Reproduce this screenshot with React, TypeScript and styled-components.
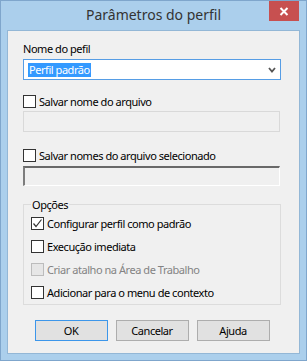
import React from 'react';
import styled, { createGlobalStyle } from 'styled-components';

const GlobalStyle = createGlobalStyle`
  html, body {
    margin: 0;
    padding: 0;
    background: #abcfec;
  }
  body {
    font-family: 'Noto Sans', 'Liberation Sans', sans-serif;
    font-size: 11px;
    letter-spacing: -0.45px;
    color: #000;
  }
  * {
    box-sizing: border-box;
  }
`;

const Window = styled.div`
  position: relative;
  width: 307px;
  height: 361px;
  display: flex;
  flex-direction: column;
  background: #abcfec;
  border: 1px solid #7fa6cc;
  padding-bottom: 6px;
`;

const TitleBar = styled.div`
  height: 29px;
  padding-bottom: 3px;
  display: flex;
  align-items: center;
  justify-content: center;
  font-size: 14px;
  letter-spacing: 0;
  color: #333;
`;

const CloseButton = styled.div`
  position: absolute;
  top: 0;
  right: 7px;
  width: 30px;
  height: 20px;
  background: #c75050;
  display: flex;
  align-items: center;
  justify-content: center;
`;

const Client = styled.div`
  flex: 1;
  margin: 0 6px;
  border: 1px solid #93b7d6;
  background: #f0f0f0;
  padding: 10px 18px 0 15px;
  display: flex;
  flex-direction: column;
`;

const FieldLabel = styled.div`
  line-height: 15px;
`;

const Combo = styled.div`
  margin-top: 3px;
  height: 21px;
  border: 1px solid #569de5;
  background: #fff;
  display: flex;
  align-items: center;
  justify-content: space-between;
  padding: 0 4px 0 4px;
`;

const Selection = styled.span`
  background: #3399ff;
  color: #fff;
  line-height: 14px;
  padding: 0 1px;
`;

const CheckRow = styled.label<{ $gap?: number }>`
  display: flex;
  align-items: center;
  height: 15px;
  margin-top: ${(p) => p.$gap ?? 0}px;
`;

const Box = styled.span<{ $disabled?: boolean }>`
  width: 13px;
  height: 13px;
  flex: none;
  border: 1px solid ${(p) => (p.$disabled ? '#bcbcbc' : '#333')};
  background: ${(p) => (p.$disabled ? '#e6e6e6' : '#fff')};
  margin-right: 3px;
  display: flex;
  align-items: center;
  justify-content: center;
`;

const CheckText = styled.span<{ $disabled?: boolean }>`
  line-height: 15px;
  color: ${(p) => (p.$disabled ? '#838383' : '#000')};
`;

const DisabledInput = styled.div`
  margin-top: 2px;
  width: 257px;
  height: 21px;
  border: 1px solid #d9d9d9;
  background: #f0f0f0;
`;

const SunkenInput = styled.div`
  margin-top: 3px;
  width: 257px;
  height: 20px;
  border-top: 2px solid #696969;
  border-left: 2px solid #7d7d7d;
  border-right: 1px solid #fff;
  border-bottom: 1px solid #fff;
  background: #f0f0f0;
`;

const Group = styled.fieldset`
  margin: 11px 0 0 0;
  min-width: 0;
  width: 258px;
  border: 1px solid #dcdcdc;
  padding: 0 0 4px 7px;
  display: flex;
  flex-direction: column;
  gap: 8px;
`;

const Legend = styled.legend`
  padding: 0 1px;
  line-height: 15px;
  margin-bottom: 4px;
`;

const ButtonRow = styled.div`
  margin-top: 15px;
  display: flex;
  justify-content: center;
  gap: 8px;
`;

const DialogButton = styled.button<{ $focused?: boolean }>`
  width: 73px;
  height: 21px;
  padding: 0;
  font: inherit;
  letter-spacing: inherit;
  color: #000;
  background: #e1e1e1;
  border: 1px solid ${(p) => (p.$focused ? '#3c96ea' : '#adadad')};
`;

const Check = ({
  label,
  checked,
  disabled,
  gap
}: {
  label: string;
  checked?: boolean;
  disabled?: boolean;
  gap?: number;
}) => (
  <CheckRow $gap={gap}>
    <Box $disabled={disabled}>
      {checked && (
        <svg width='11' height='11' viewBox='0 0 11 11'>
          <path d='M1.5 5.5 L4 8.5 L9.5 1.5' fill='none' stroke='#333' strokeWidth='1.2' />
        </svg>
      )}
    </Box>
    <CheckText $disabled={disabled}>{label}</CheckText>
  </CheckRow>
);

export default function App() {
  return (
    <>
      <GlobalStyle />
      <Window>
        <TitleBar>Parâmetros do perfil</TitleBar>
        <CloseButton>
          <svg width='10' height='9' viewBox='0 0 10 9'>
            <path d='M1.5 1 L8.5 8 M8.5 1 L1.5 8' stroke='#fff' strokeWidth='2' />
          </svg>
        </CloseButton>
        <Client>
          <FieldLabel>Nome do pefil</FieldLabel>
          <Combo>
            <Selection>Perfil padrão</Selection>
            <svg width='8' height='6' viewBox='0 0 8 6'>
              <path d='M1 1 L4 4.5 L7 1' fill='none' stroke='#555' strokeWidth='1.8' />
            </svg>
          </Combo>
          <Check label='Salvar nome do arquivo' gap={14} />
          <DisabledInput />
          <Check label='Salvar nomes do arquivo selecionado' gap={16} />
          <SunkenInput />
          <Group>
            <Legend>Opções</Legend>
            <Check label='Configurar perfil como padrão' checked />
            <Check label='Execução imediata' />
            <Check label='Criar atalho na Área de Trabalho' disabled />
            <Check label='Adicionar para o menu de contexto' />
          </Group>
          <ButtonRow>
            <DialogButton $focused>OK</DialogButton>
            <DialogButton>Cancelar</DialogButton>
            <DialogButton>Ajuda</DialogButton>
          </ButtonRow>
        </Client>
      </Window>
    </>
  );
}
